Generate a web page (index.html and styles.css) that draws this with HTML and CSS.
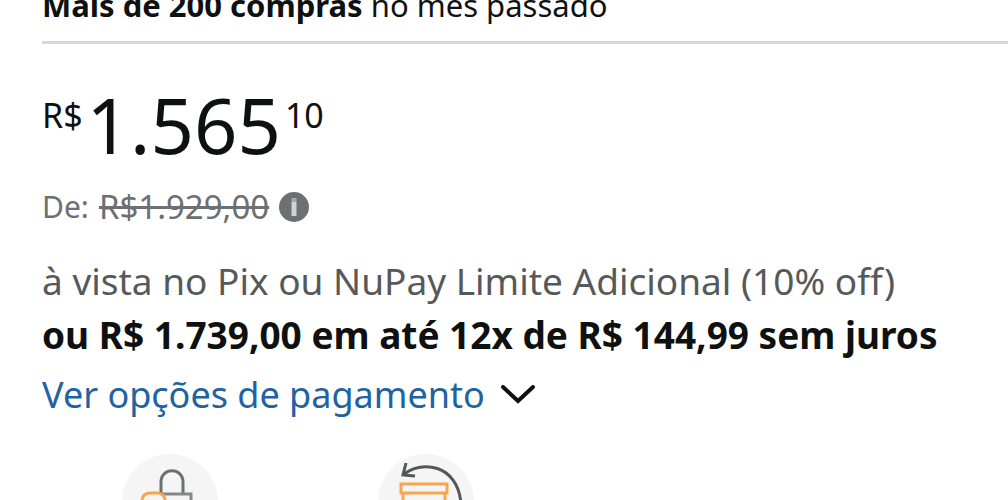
FILE: index.html
```
<!DOCTYPE html>
<html lang="pt-BR">
<head>
    <meta charset="UTF-8">
    <meta name="viewport" content="width=device-width, initial-scale=1.0">
    <title>Oferta</title>
    <link rel="stylesheet" href="styles.css">
</head>
<body>
    <main class="offer">
        <p class="bought"><strong>Mais de 200 compras</strong> no mês passado</p>
        <hr class="divider">

        <div class="price">
            <span class="price-small">R$</span>
            <span class="price-whole">1.565</span>
            <span class="price-small price-cents">10</span>
        </div>

        <div class="list-price">
            <span>De:</span>
            <s>R$1.929,00</s>
            <button class="info" type="button" aria-label="Mais informações">
                <svg viewBox="0 0 30 30">
                    <circle cx="15" cy="15" r="15" fill="#6c7072"/>
                    <path d="M15 6v4" stroke="#a4a8a9" stroke-width="5"/>
                    <path d="M15 10v14" stroke="#d0d3d3" stroke-width="5"/>
                </svg>
            </button>
        </div>

        <p class="line pix">à vista no Pix ou NuPay Limite Adicional (10% off)</p>
        <p class="line installments">ou R$ 1.739,00 em até 12x de R$ 144,99 sem juros</p>
        <a class="line payment" href="#">
            <span>Ver opções de pagamento</span>
            <svg class="chevron" viewBox="0 0 34 20">
                <path d="M2 2l15 14L32 2" fill="none" stroke="#0f1111" stroke-width="4" stroke-linecap="round"/>
            </svg>
        </a>

        <div class="features">
            <div class="feature">
                <svg viewBox="0 0 96 96" fill="none" stroke-width="3">
                    <circle cx="48" cy="48" r="48" fill="#f5f5f5"/>
                    <path d="M39 40V28c0-15 22-15 22 0v12" stroke="#6e7070"/>
                    <path d="M39 40h30v40H34" stroke="#858787" stroke-width="3"/>
                    <path d="M20 52v-5c0-6 4-8 9-8h6c5 0 8 3 8 8v32H20z" stroke="#f9a550"/>
                </svg>
            </div>
            <div class="feature">
                <svg viewBox="0 0 96 96" fill="none" stroke-width="3">
                    <circle cx="48" cy="48" r="48" fill="#f5f5f5"/>
                    <path d="M25 21C42 6 80 9 83 50" stroke="#555757"/>
                    <path d="M28 9l-3 12 12 1" stroke="#555757"/>
                    <path d="M23 30h46v9H23zM25 39v40h42V39" stroke="#f9a550"/>
                </svg>
            </div>
        </div>
    </main>
</body>
</html>
```
FILE: styles.css
```
body {
    margin: 0;
    height: 100vh;
    overflow: hidden;
    background: #fff;
    color: #0f1111;
    font-family: "Noto Sans", "Open Sans", sans-serif;
}

.offer {
    margin-top: -15px;
    padding-left: 42px;
}

.bought {
    margin: 0;
    font-size: 31px;
    line-height: 40px;
}

.divider {
    height: 3px;
    margin: 16px 0 41px;
    border: 0;
    background: #d5d9d9;
}

.price {
    display: flex;
    gap: 4px;
}

.price-small {
    font-size: 34px;
    line-height: 60px;
}

.price-whole {
    font-size: 76px;
    line-height: 80px;
}

.list-price {
    display: flex;
    align-items: center;
    gap: 10px;
    margin-top: 22px;
    color: #6c7072;
    font-size: 30px;
    line-height: 40px;
}

.list-price s {
    font-size: 33px;
    text-decoration-thickness: 3px;
}

.info {
    width: 30px;
    height: 30px;
    padding: 0;
    border: 0;
    background: none;
    cursor: pointer;
}

.info svg {
    display: block;
}

.line {
    margin: 0;
    font-size: 37px;
    line-height: 54px;
}

.pix {
    margin-top: 27px;
    color: #565959;
}

.installments {
    font-weight: bold;
}

.payment {
    display: flex;
    align-items: center;
    gap: 16px;
    margin-top: 6px;
    color: #2162a1;
    font-size: 36px;
    text-decoration: none;
}

.chevron {
    width: 34px;
    height: 20px;
}

.features {
    display: flex;
    margin-top: 32px;
}

.feature {
    display: flex;
    justify-content: center;
    width: 256px;
}

.feature svg {
    width: 96px;
    height: 96px;
}
```
